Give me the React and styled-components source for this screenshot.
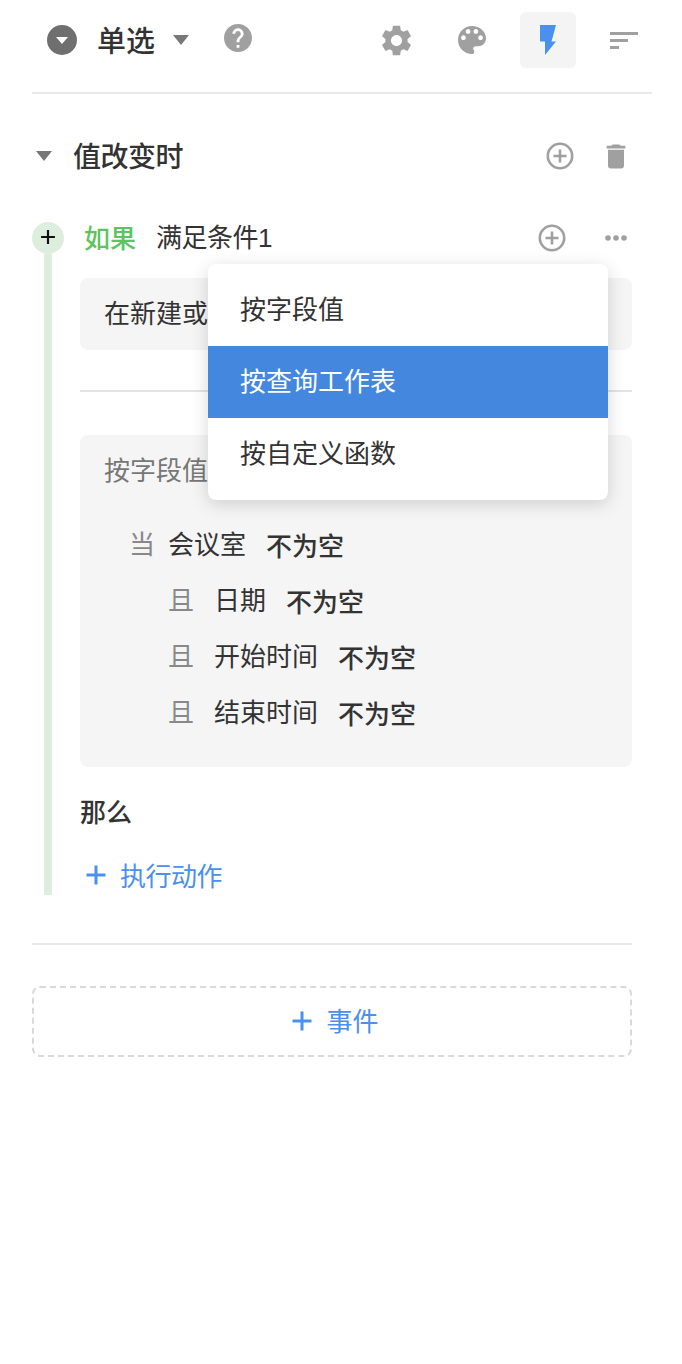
import React from "react";
import styled, { createGlobalStyle } from "styled-components";

const Global = createGlobalStyle`
  html, body {
    margin: 0;
    padding: 0;
    background: #fff;
  }
  body {
    font-family: "Liberation Sans", "Noto Sans CJK SC", sans-serif;
    color: #333;
  }
  * {
    box-sizing: border-box;
  }
`;

const Page = styled.div`
  width: 682px;
  height: 1364px;
  padding: 12px 30px 0 32px;
  overflow: hidden;
`;

const Toolbar = styled.div`
  display: flex;
  align-items: center;
  justify-content: space-between;
  height: 82px;
  padding-bottom: 24px;
  border-bottom: 2px solid #e8e8e8;
`;
const ToolbarLeft = styled.div`
  display: flex;
  align-items: center;
  padding-left: 15px;
`;
const TypeBadge = styled.span`
  display: flex;
  align-items: center;
  justify-content: center;
  width: 30px;
  height: 30px;
  border-radius: 50%;
  background: #6f6f6f;
  margin-right: 20px;
`;
const Title = styled.span`
  margin-top: 4px;
  font-size: 29px;
  font-weight: 500;
  line-height: 40px;
  color: #333;
`;
const Caret = styled.span`
  display: block;
  flex: none;
  width: 0;
  height: 0;
  border-left: ${(p) => p.$size}px solid transparent;
  border-right: ${(p) => p.$size}px solid transparent;
  border-top: ${(p) => Math.round(p.$size * 1.2)}px solid ${(p) => p.$color || "#777"};
`;
const TitleCaret = styled(Caret)`
  margin: -1px 35px 0 18px;
`;
const HelpIcon = styled.svg`
  display: block;
  width: 28px;
  height: 28px;
  margin-top: -4px;
  fill: #a0a0a0;
`;
const Tabs = styled.div`
  display: flex;
  gap: 20px;
`;
const Tab = styled.div`
  display: flex;
  align-items: center;
  justify-content: center;
  width: 56px;
  height: 56px;
  border-radius: 6px;
  background: ${(p) => (p.$active ? "#f4f4f4" : "transparent")};
  color: ${(p) => (p.$active ? "#4a90ee" : "#a0a0a0")};
`;

const EventHead = styled.div`
  display: flex;
  align-items: center;
  width: 600px;
  height: 40px;
  margin-top: 42px;
  padding-left: 4px;
`;
const EventTitle = styled.h2`
  flex: 1;
  margin: 4px 0 0 21px;
  font-size: 28px;
  font-weight: 500;
  line-height: 40px;
  letter-spacing: -0.5px;
  color: #333;
`;
const IconSlot = styled.span`
  display: flex;
  align-items: center;
  justify-content: center;
  width: 32px;
  height: 32px;
  margin-left: 24px;
  color: #a0a0a0;
`;

const Branch = styled.div`
  position: relative;
  display: flex;
  width: 600px;
  margin-top: 46px;
`;
const Rail = styled.div`
  flex: none;
  display: flex;
  flex-direction: column;
  align-items: center;
  width: 32px;
  margin-right: 16px;
`;
const RailDot = styled.span`
  flex: none;
  display: flex;
  align-items: center;
  justify-content: center;
  width: 32px;
  height: 32px;
  padding-bottom: 2px;
  border-radius: 50%;
  background: #deeede;
  color: #111;
`;
const RailLine = styled.span`
  flex: 1;
  width: 8px;
  background: #deeede;
`;
const BranchBody = styled.div`
  flex: 1;
  height: 673px;
  display: flex;
  flex-direction: column;
`;
const IfRow = styled.div`
  display: flex;
  align-items: center;
  height: 32px;
`;
const IfLabel = styled.span`
  margin-left: 4px;
  padding-bottom: 4px;
  font-size: 26px;
  font-weight: 500;
  color: #5cc461;
`;
const IfName = styled.span`
  flex: 1;
  margin-left: 20px;
  padding-bottom: 6px;
  font-size: 26px;
  letter-spacing: -0.5px;
  color: #333;
`;
const IfIcons = styled.div`
  display: flex;
  gap: 8px;
`;
const Card = styled.div`
  background: #f5f5f5;
  border-radius: 8px;
  padding: 0 24px;
`;
const TriggerCard = styled(Card)`
  display: flex;
  align-items: center;
  height: 72px;
  margin-top: 24px;
  padding-bottom: 5px;
  font-size: 26px;
  color: #333;
`;
const Rule = styled.div`
  height: 2px;
  margin-top: 40px;
  background: #e4e4e4;
`;
const FilterCard = styled(Card)`
  height: 332px;
  margin-top: 43px;
  padding-top: 18px;
`;
const FilterTitle = styled.div`
  font-size: 26px;
  line-height: 36px;
  color: #777;
`;
const ConditionList = styled.div`
  margin-top: 26px;
`;
const Condition = styled.div`
  display: flex;
  align-items: center;
  height: 56px;
  padding-left: ${(p) => (p.$first ? 25 : 64)}px;
  font-size: 26px;
  color: #333;
`;
const Joiner = styled.span`
  width: 26px;
  margin-top: -2px;
  margin-right: ${(p) => (p.$first ? 13 : 20)}px;
  color: #888;
`;
const FieldName = styled.span`
  margin-top: -2px;
  margin-right: ${(p) => (p.$first ? 20 : 20)}px;
`;
const Operator = styled.span`
  margin-top: 2px;
  font-weight: 500;
`;
const ThenLabel = styled.div`
  margin-top: 28px;
  font-size: 26px;
  font-weight: 500;
  line-height: 36px;
  color: #333;
`;
const ActionLink = styled.div`
  display: flex;
  align-items: center;
  gap: 13px;
  height: 40px;
  margin-top: 24px;
  padding-left: 5px;
  font-size: 26px;
  letter-spacing: -0.5px;
  color: #4a90ee;
`;
const LinkText = styled.span`
  margin-top: -2px;
`;

const Menu = styled.div`
  position: absolute;
  left: 176px;
  top: 42px;
  width: 400px;
  padding: 10px 0;
  border-radius: 8px;
  background: #fff;
  box-shadow: 0 4px 18px rgba(0, 0, 0, 0.16);
`;
const MenuItem = styled.div`
  display: flex;
  align-items: center;
  height: 72px;
  padding: 0 32px 6px;
  font-size: 26px;
  background: ${(p) => (p.$active ? "#4487df" : "transparent")};
  color: ${(p) => (p.$active ? "#fff" : "#333")};
`;

const BottomRule = styled.div`
  width: 600px;
  height: 2px;
  margin-top: 48px;
  background: #e8e8e8;
`;
const AddEvent = styled.div`
  display: flex;
  align-items: center;
  justify-content: center;
  gap: 13px;
  width: 600px;
  height: 71px;
  margin-top: 41px;
  padding: 0 0 2px 6px;
  border: 2px dashed #d9d9d9;
  border-radius: 8px;
  font-size: 26px;
  color: #4a90ee;
`;

const PlusCircle = () => (
  <svg width="28" height="28" viewBox="0 0 28 28" fill="none" stroke="currentColor" strokeWidth="2.6">
    <circle cx="14" cy="14" r="12.2" />
    <path d="M14 7.5v13M7.5 14h13" />
  </svg>
);

const Plus = ({ size = 22, width = 3 }) => (
  <svg width={size} height={size} viewBox="0 0 22 22" fill="none" stroke="currentColor" strokeWidth={width}>
    <path d="M11 1.5v19M1.5 11h19" />
  </svg>
);

const conditions = [
  { joiner: "当", field: "会议室", first: true },
  { joiner: "且", field: "日期" },
  { joiner: "且", field: "开始时间" },
  { joiner: "且", field: "结束时间" },
];

function App() {
  return (
    <Page>
      <Global />
      <Toolbar>
        <ToolbarLeft>
          <TypeBadge>
            <Caret $size={6} $color="#fff" />
          </TypeBadge>
          <Title>单选</Title>
          <TitleCaret $size={8} />
          <HelpIcon viewBox="2 2 20 20">
            <path d="M12 2C6.48 2 2 6.48 2 12s4.48 10 10 10 10-4.48 10-10S17.52 2 12 2zm1 17h-2v-2h2v2zm2.07-7.75l-.9.92C13.45 12.9 13 13.5 13 15h-2v-.5c0-1.1.45-2.1 1.17-2.83l1.24-1.26c.37-.36.59-.86.59-1.41 0-1.1-.9-2-2-2s-2 .9-2 2H8c0-2.21 1.79-4 4-4s4 1.79 4 4c0 .88-.36 1.68-.93 2.25z" />
          </HelpIcon>
        </ToolbarLeft>
        <Tabs>
          <Tab>
            <svg width="37" height="37" viewBox="0 0 24 24" fill="currentColor">
              <path d="M19.14 12.94c.04-.3.06-.61.06-.94 0-.32-.02-.64-.07-.94l2.03-1.58c.18-.14.23-.41.12-.61l-1.92-3.32c-.12-.22-.37-.29-.59-.22l-2.39.96c-.5-.38-1.03-.7-1.62-.94l-.36-2.54c-.04-.24-.24-.41-.48-.41h-3.84c-.24 0-.43.17-.47.41l-.36 2.54c-.59.24-1.13.57-1.62.94l-2.39-.96c-.22-.08-.47 0-.59.22L2.74 8.87c-.12.21-.08.47.12.61l2.03 1.58c-.05.3-.09.63-.09.94s.02.64.07.94l-2.03 1.58c-.18.14-.23.41-.12.61l1.92 3.32c.12.22.37.29.59.22l2.39-.96c.5.38 1.03.7 1.62.94l.36 2.54c.05.24.24.41.48.41h3.84c.24 0 .44-.17.47-.41l.36-2.54c.59-.24 1.13-.56 1.62-.94l2.39.96c.22.08.47 0 .59-.22l1.92-3.32c.12-.22.07-.47-.12-.61l-2.01-1.58zM12 15.6c-1.98 0-3.6-1.62-3.6-3.6s1.62-3.6 3.6-3.6 3.6 1.62 3.6 3.6-1.62 3.6-3.6 3.6z" />
            </svg>
          </Tab>
          <Tab>
            <svg width="28" height="28" viewBox="3 3 18 18" fill="currentColor">
              <path d="M12 3c-4.97 0-9 4.03-9 9s4.03 9 9 9c.83 0 1.5-.67 1.5-1.5 0-.39-.15-.74-.39-1.01-.23-.26-.38-.61-.38-.99 0-.83.67-1.5 1.5-1.5H16c2.76 0 5-2.24 5-5 0-4.42-4.03-8-9-8zm-5.5 9c-.83 0-1.5-.67-1.5-1.5S5.67 9 6.5 9 8 9.67 8 10.5 7.33 12 6.5 12zm3-4C8.67 8 8 7.33 8 6.5S8.67 5 9.5 5s1.5.67 1.5 1.5S10.33 8 9.5 8zm5 0c-.83 0-1.5-.67-1.5-1.5S13.67 5 14.5 5s1.5.67 1.5 1.5S15.33 8 14.5 8zm3 4c-.83 0-1.5-.67-1.5-1.5S16.67 9 17.5 9s1.5.67 1.5 1.5-.67 1.5-1.5 1.5z" />
            </svg>
          </Tab>
          <Tab $active>
            <svg width="16" height="30" viewBox="0 0 16 30" fill="currentColor">
              <path d="M0 0H16L11.5 16.5H16L5 30V16.5H0z" />
            </svg>
          </Tab>
          <Tab>
            <svg width="28" height="20" viewBox="0 0 28 20" fill="currentColor">
              <path d="M0 2h28v3H0zM0 9h18v3H0zM0 16h9v3H0z" />
            </svg>
          </Tab>
        </Tabs>
      </Toolbar>

      <EventHead>
        <Caret $size={8} />
        <EventTitle>值改变时</EventTitle>
        <IconSlot>
          <PlusCircle />
        </IconSlot>
        <IconSlot>
          <svg width="33" height="33" viewBox="0 0 24 24" fill="currentColor">
            <path d="M6 19c0 1.1.9 2 2 2h8c1.1 0 2-.9 2-2V7H6v12zM19 4h-3.5l-1-1h-5l-1 1H5v2h14V4z" />
          </svg>
        </IconSlot>
      </EventHead>

      <Branch>
        <Rail>
          <RailDot>
            <Plus size={16} width={3} />
          </RailDot>
          <RailLine />
        </Rail>
        <BranchBody>
          <IfRow>
            <IfLabel>如果</IfLabel>
            <IfName>满足条件1</IfName>
            <IfIcons>
              <IconSlot>
                <PlusCircle />
              </IconSlot>
              <IconSlot>
                <svg width="24" height="8" viewBox="0 0 24 8" fill="currentColor">
                  <circle cx="4" cy="4" r="2.8" />
                  <circle cx="12" cy="4" r="2.8" />
                  <circle cx="20" cy="4" r="2.8" />
                </svg>
              </IconSlot>
            </IfIcons>
          </IfRow>
          <TriggerCard>在新建或</TriggerCard>
          <Rule />
          <FilterCard>
            <FilterTitle>按字段值</FilterTitle>
            <ConditionList>
              {conditions.map((c) => (
                <Condition key={c.field} $first={c.first}>
                  <Joiner $first={c.first}>{c.joiner}</Joiner>
                  <FieldName $first={c.first}>{c.field}</FieldName>
                  <Operator>不为空</Operator>
                </Condition>
              ))}
            </ConditionList>
          </FilterCard>
          <ThenLabel>那么</ThenLabel>
          <ActionLink>
            <Plus />
            <LinkText>执行动作</LinkText>
          </ActionLink>
        </BranchBody>
        <Menu>
          <MenuItem>按字段值</MenuItem>
          <MenuItem $active>按查询工作表</MenuItem>
          <MenuItem>按自定义函数</MenuItem>
        </Menu>
      </Branch>

      <BottomRule />
      <AddEvent>
        <Plus />
        <LinkText>事件</LinkText>
      </AddEvent>
    </Page>
  );
}

export default App;
